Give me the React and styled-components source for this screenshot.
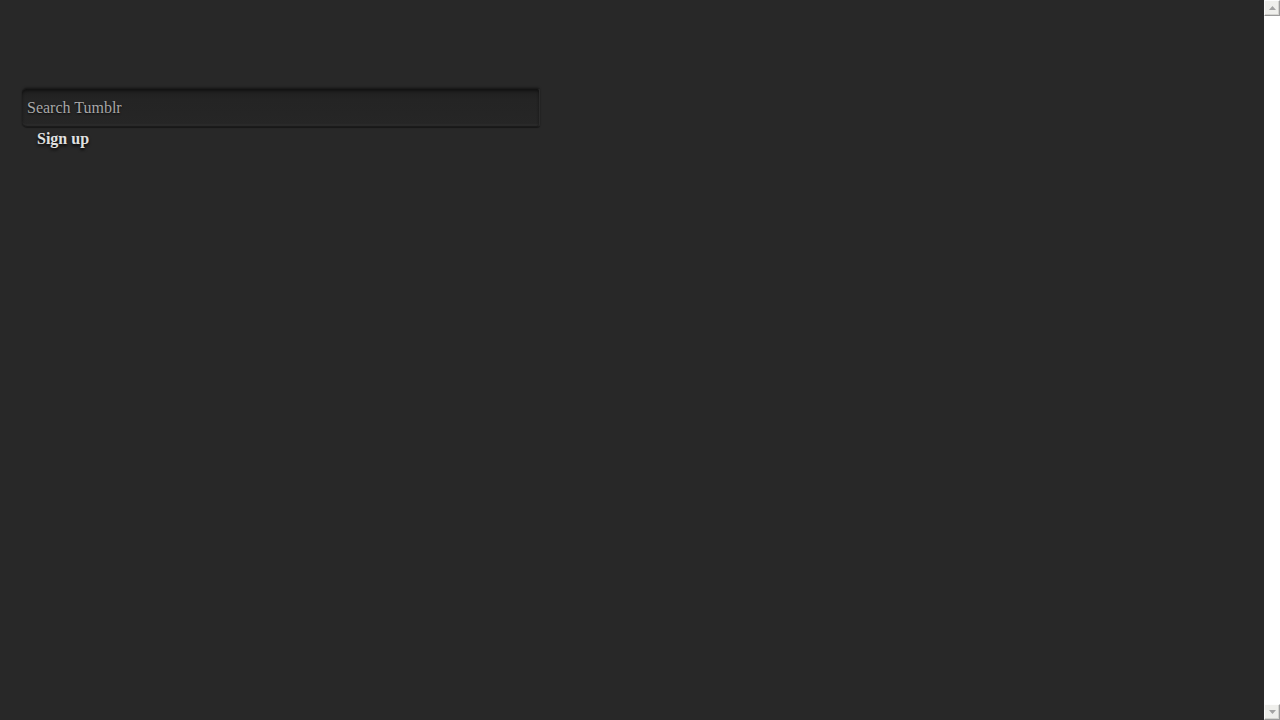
import React from 'react';
import styled, { createGlobalStyle } from 'styled-components';

const GlobalStyle = createGlobalStyle`
  html, body {
    margin: 0;
    padding: 0;
    height: 100%;
    overflow: hidden;
    background: #282828;
  }
  #root {
    height: 100%;
  }
`;

const Page = styled.div`
  display: flex;
  width: 1280px;
  height: 720px;
  background: #282828;
  font-family: 'Liberation Serif', 'Times New Roman', serif;
`;

const Main = styled.div`
  flex: 1;
  padding: 88px 0 0 22px;
`;

const SearchBox = styled.div`
  width: 518px;
  height: 39px;
  box-sizing: border-box;
  display: flex;
  align-items: center;
  padding: 0 5px;
  border-radius: 5px 3px 3px 5px;
  background: linear-gradient(#1f1f1f, #242424 30%, #262626);
  border-top: 1px solid #1a1a1a;
  border-bottom: 1px solid #1b1b1b;
  border-right: 1px solid #2c2c2c;
  box-shadow: inset 0 2px 3px rgba(0, 0, 0, 0.45), inset 0 -2px 0 #2a2a2a,
    0 -1px 2px rgba(0, 0, 0, 0.25), 0 1px 1px rgba(0, 0, 0, 0.4);
`;

const SearchInput = styled.input`
  flex: 1;
  border: none;
  outline: none;
  background: transparent;
  padding: 0;
  font-family: inherit;
  font-size: 16px;
  color: #b0b0b0;
  text-shadow: 0 1px 2px rgba(0, 0, 0, 0.8);
  &::placeholder {
    color: #a8a8a8;
  }
`;

const SignUp = styled.a`
  display: inline-block;
  margin: 3px 0 0 15px;
  font-size: 16px;
  font-weight: bold;
  color: #e0e0e0;
  text-decoration: none;
  text-shadow: 0 2px 3px rgba(0, 0, 0, 0.85);
`;

const Scrollbar = styled.div`
  width: 16px;
  display: flex;
  flex-direction: column;
  justify-content: space-between;
  background: #fff;
`;

const ArrowButton = styled.div`
  width: 16px;
  height: 16px;
  box-sizing: border-box;
  display: flex;
  align-items: center;
  justify-content: center;
  background: #efefec;
  border: 1px solid #fdfdfd;
  border-right-color: #9c9c9c;
  border-bottom-color: #9c9c9c;
  box-shadow: inset -1px -1px 0 #d4d4d0;
`;

const Arrow = ({ down }) => (
  <svg width="7" height="4" viewBox="0 0 7 4">
    <path d={down ? 'M0 0H7L3.5 4Z' : 'M0 4H7L3.5 0Z'} fill="#a3a3a3" />
  </svg>
);

export default function App() {
  return (
    <Page>
      <GlobalStyle />
      <Main>
        <SearchBox>
          <SearchInput placeholder="Search Tumblr" />
        </SearchBox>
        <SignUp href="#">Sign up</SignUp>
      </Main>
      <Scrollbar>
        <ArrowButton>
          <Arrow />
        </ArrowButton>
        <ArrowButton>
          <Arrow down />
        </ArrowButton>
      </Scrollbar>
    </Page>
  );
}
